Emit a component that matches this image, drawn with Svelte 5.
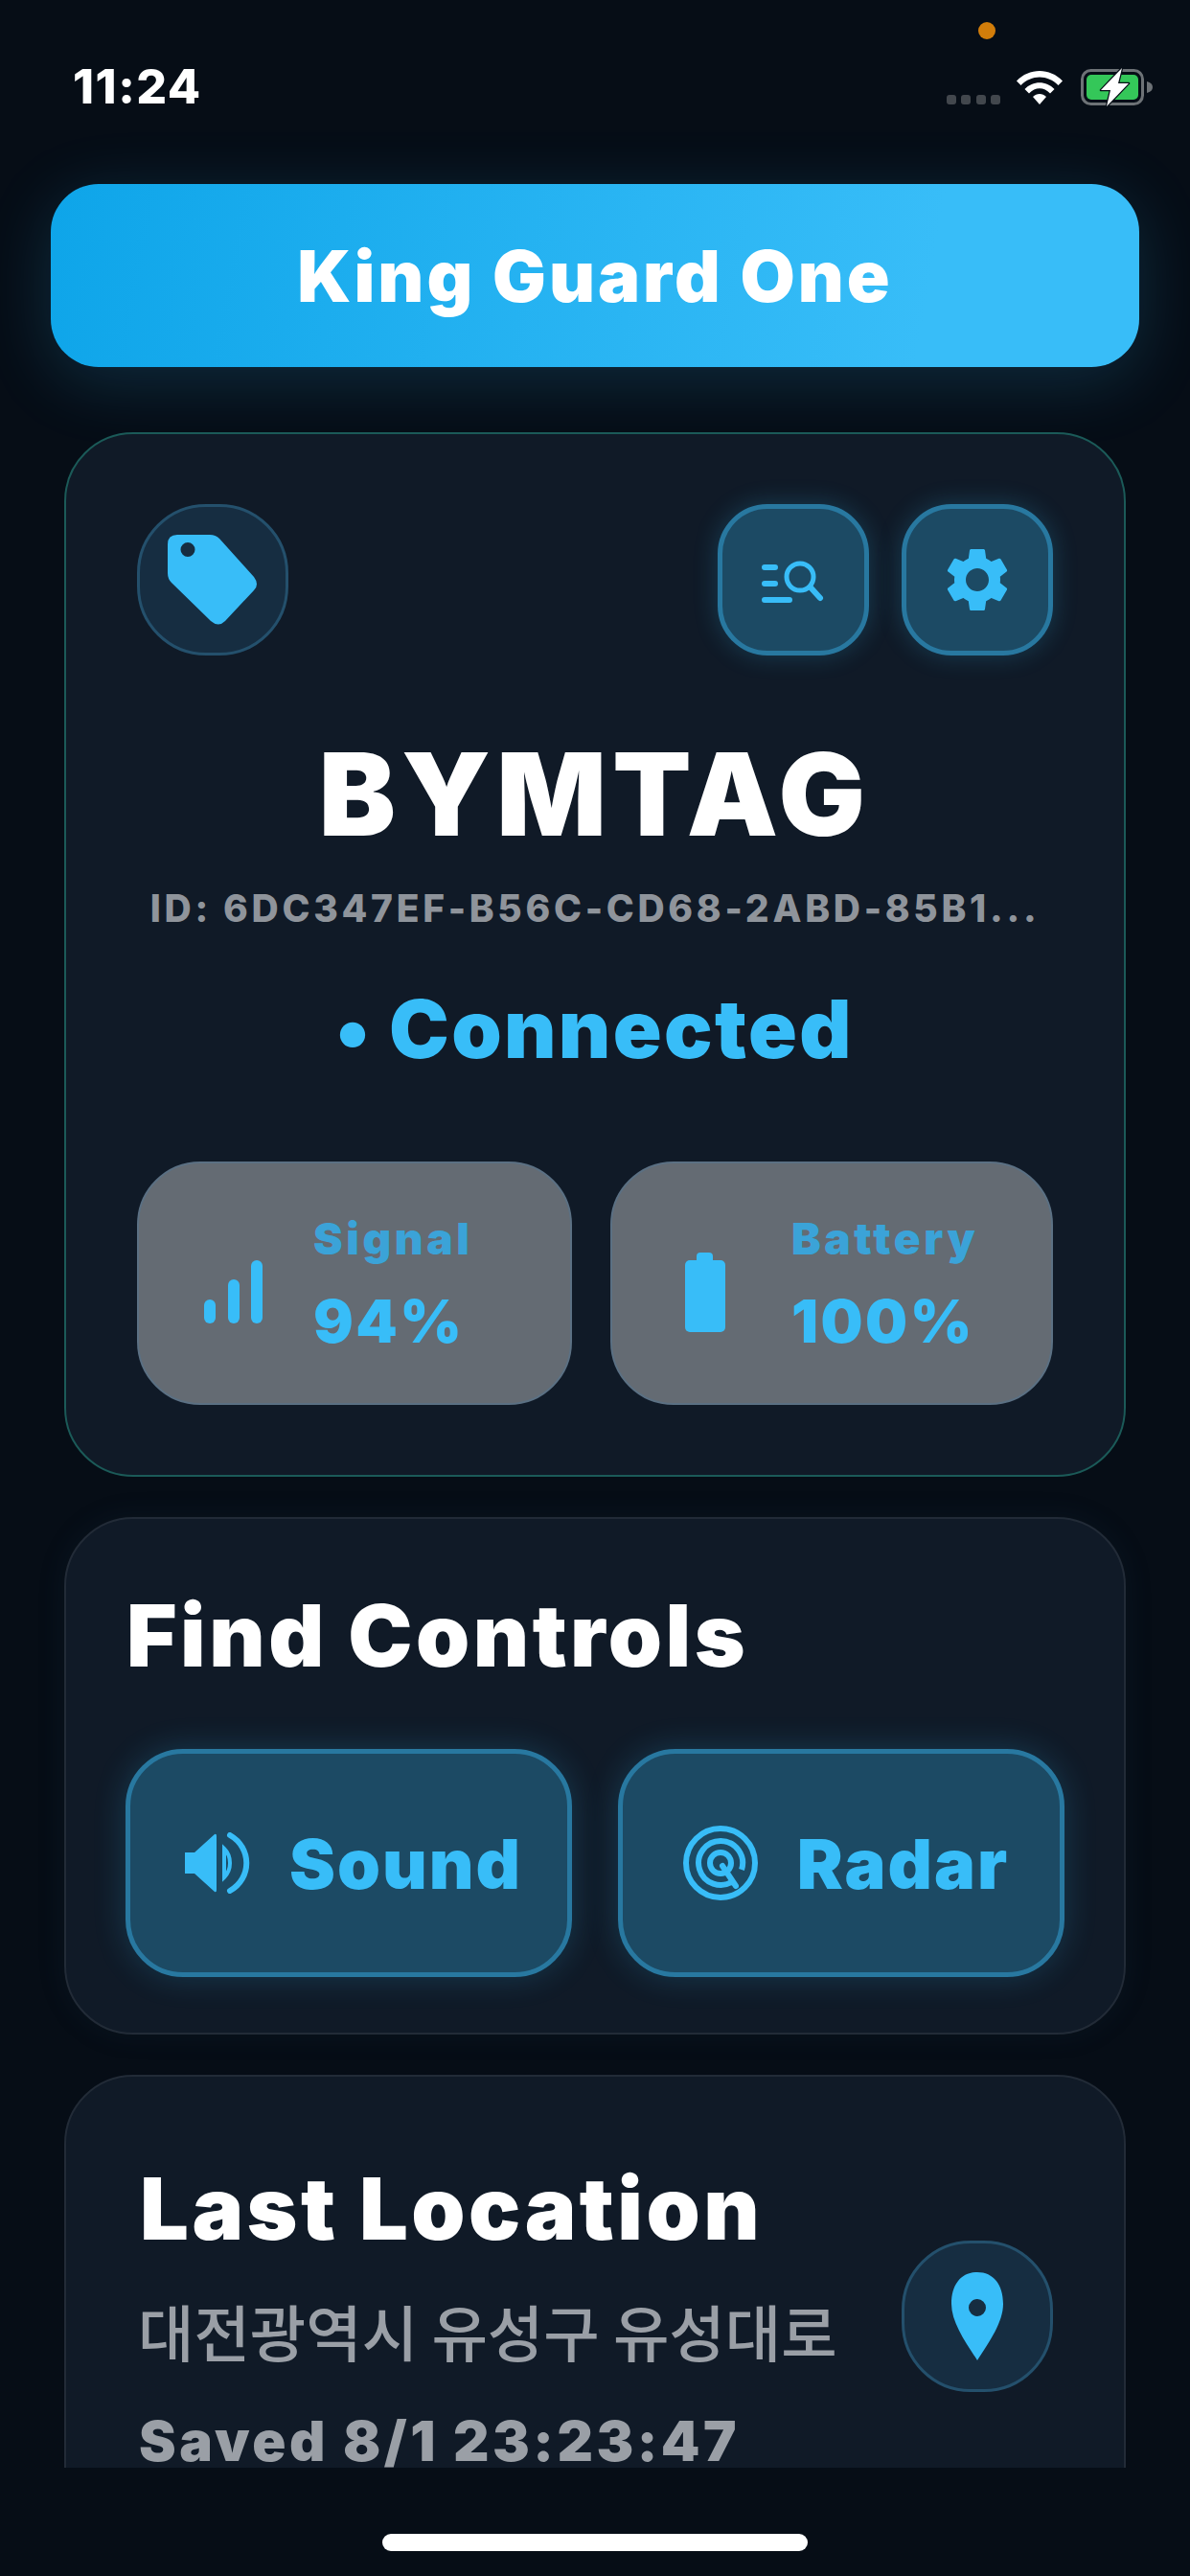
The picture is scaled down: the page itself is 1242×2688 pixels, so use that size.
<script>
  const stats = [
    { label: 'Signal', value: '94%', kind: 'signal' },
    { label: 'Battery', value: '100%', kind: 'battery' }
  ];
</script>

<div class="page">
  <div class="status">
    <span class="time">11:24</span>
    <span class="mic"></span>
    <div class="status-right">
      <div class="dots"><i></i><i></i><i></i><i></i></div>
      <svg class="wifi" viewBox="0 0 50 36" width="50" height="36">
        <path d="M1 11.5 C14 -2.5 36 -2.5 49 11.5 L44.5 16 C33.5 4.5 16.5 4.5 5.500 16 Z" fill="#fff"/>
        <path d="M9.500 20 C18 11 32 11 40.500 20 L36 24.500 C29.500 17.500 20.500 17.500 14 24.500 Z" fill="#fff"/>
        <path d="M18 28 C22 24 28 24 32 28 L25 36 Z" fill="#fff"/>
      </svg>
      <svg class="batt" viewBox="0 0 78 40" width="78" height="40">
        <rect x="1.500" y="2.500" width="63" height="35" rx="9" fill="none" stroke="#6d7276" stroke-width="3"/>
        <rect x="6" y="7" width="54" height="26" rx="5" fill="#34c759"/>
        <path d="M69 14 C73 15 75 17 75 20 C75 23 73 25 69 26 Z" fill="#6d7276"/>
        <path d="M43 0 L21 23 L31 23 L27 40 L50 16 L39 16 Z" fill="#fff" stroke="#070e17" stroke-width="2.500" stroke-linejoin="round" paint-order="stroke"/>
      </svg>
    </div>
  </div>

  <div class="brand">King Guard One</div>

  <main>
    <section class="card hero">
      <div class="top-row">
        <div class="round-btn">
          <svg viewBox="0 0 158 158" width="158" height="158">
            <path fill-rule="evenodd" fill="#38bdf8" d="M42 32 H76 Q82 32 86 36 L122 76 Q128 84 122 90 L92 122 Q85 129 77 122 L36 82 Q32 78 32 72 V42 Q32 32 42 32 Z M53 40 A7.500 7.500 0 1 0 53 55 A7.500 7.500 0 1 0 53 40 Z"/>
          </svg>
        </div>
        <div class="actions">
          <button class="glow-btn" aria-label="Search">
            <svg viewBox="0 0 158 158" width="158" height="158" fill="none" stroke="#38bdf8" stroke-linecap="round">
              <path d="M49 66 H60 M49 83 H60 M49 100 H75" stroke-width="6"/>
              <circle cx="86" cy="76" r="14" stroke-width="5"/>
              <path d="M97 87 L107 98" stroke-width="6"/>
            </svg>
          </button>
          <button class="glow-btn" aria-label="Settings">
            <svg viewBox="0 0 24 24" width="80" height="80"><path fill="#38bdf8" d="M19.14 12.94c.04-.3.06-.61.06-.94 0-.32-.02-.64-.07-.94l2.03-1.58c.18-.14.23-.41.12-.61l-1.92-3.32c-.12-.22-.37-.29-.59-.22l-2.39.96c-.5-.38-1.03-.7-1.62-.94l-.36-2.54c-.04-.24-.24-.41-.48-.41h-3.84c-.24 0-.43.17-.47.41l-.36 2.54c-.59.24-1.13.57-1.62.94l-2.39-.96c-.22-.08-.47 0-.59.22L2.740 8.870c-.12.21-.08.47.12.61l2.030 1.580c-.05.3-.09.63-.09.94s.02.64.07.94l-2.030 1.580c-.18.14-.23.41-.12.61l1.920 3.320c.12.22.37.29.59.22l2.390-.96c.5.38 1.030.7 1.620.94l.36 2.540c.05.24.24.41.48.41h3.840c.24 0 .44-.17.47-.41l.36-2.540c.59-.24 1.130-.56 1.620-.94l2.390.96c.22.08.47 0 .59-.22l1.920-3.320c.12-.22.07-.47-.12-.61l-2.010-1.580zM12 15.600c-1.980 0-3.600-1.620-3.600-3.600s1.620-3.600 3.600-3.600 3.600 1.620 3.600 3.600-1.620 3.600-3.600 3.600z"/></svg>
          </button>
        </div>
      </div>
      <h1>BYMTAG</h1>
      <p class="id">ID: 6DC347EF-B56C-CD68-2ABD-85B1...</p>
      <p class="state">• Connected</p>
      <div class="stats">
        {#each stats as s}
          <div class="stat">
            {#if s.kind === 'signal'}
              <svg viewBox="0 0 62 66" width="62" height="66" fill="#38bdf8">
                <rect x="0" y="41" width="12" height="25" rx="6"/>
                <rect x="25" y="20" width="12" height="46" rx="6"/>
                <rect x="49" y="0" width="12" height="66" rx="6"/>
              </svg>
            {:else}
              <svg viewBox="0 0 42 83" width="42" height="83" fill="#38bdf8">
                <rect x="12" y="0" width="17" height="14" rx="4"/>
                <rect x="0" y="8" width="42" height="75" rx="5"/>
              </svg>
            {/if}
            <div class="stat-text">
              <span class="stat-label">{s.label}</span>
              <span class="stat-value">{s.value}</span>
            </div>
          </div>
        {/each}
      </div>
    </section>

    <section class="card find">
      <h2>Find Controls</h2>
      <div class="find-row">
        <button class="find-btn">
          <svg viewBox="0 0 68 64" width="68" height="64" fill="#38bdf8">
            <path d="M0 21 H10 L31 2 Q33 1 33 4 V60 Q33 63 31 62 L10 43 H0 Z"/>
            <path d="M41 17 C49 25 49 39 41 47 L41 17 Z" fill="none" stroke="#38bdf8" stroke-width="4"/>
            <path d="M47 3 C70 16 70 48 47 61" fill="none" stroke="#38bdf8" stroke-width="6" stroke-linecap="round"/>
          </svg>
          <span>Sound</span>
        </button>
        <button class="find-btn radar">
          <svg viewBox="0 0 78 78" width="78" height="78" fill="none" stroke="#38bdf8" stroke-width="6">
            <circle cx="39" cy="39" r="36"/>
            <path d="M52 58 A23 23 0 1 1 61 46"/>
            <circle cx="39" cy="39" r="11"/>
            <path d="M41 42 L55 63" stroke-linecap="round"/>
          </svg>
          <span>Radar</span>
        </button>
      </div>
    </section>

    <section class="card last">
      <div class="last-text">
        <h2>Last Location</h2>
        <p class="addr">대전광역시 유성구 유성대로</p>
        <p class="saved">Saved 8/1 23:23:47</p>
      </div>
      <div class="round-btn pin">
        <svg viewBox="0 0 54 92" width="54" height="92">
          <path fill-rule="evenodd" fill="#38bdf8" d="M27 0 C44 0 54 13 54 33 C54 52 40 72 27 92 C14 72 0 52 0 33 C0 13 10 0 27 0 Z M27 28 A9 9 0 1 0 27 46 A9 9 0 1 0 27 28 Z"/>
        </svg>
      </div>
    </section>
  </main>

  <div class="bottom"><div class="home"></div></div>
</div>

<style>
  :global(body) {
    margin: 0;
    background: #060d16;
  }
  .page {
    position: relative;
    width: 1242px;
    height: 2688px;
    display: flex;
    flex-direction: column;
    overflow: hidden;
    background: #060d16;
    font-family: Inter, "Noto Sans CJK KR", sans-serif;
    color: #fff;
  }
  .status {
    height: 192px;
    flex: none;
    display: flex;
    align-items: flex-start;
    justify-content: space-between;
    padding: 65px 36px 0 76px;
    box-sizing: border-box;
  }
  .time {
    font-size: 50px;
    font-weight: 800;
    line-height: 50px;
    letter-spacing: 1.500px;
  }
  .mic {
    position: absolute;
    left: 1021px;
    top: 23px;
    width: 18px;
    height: 18px;
    border-radius: 50%;
    background: #d27d0a;
  }
  .status-right {
    display: flex;
    align-items: flex-end;
    gap: 18px;
    padding-top: 6px;
  }
  .dots {
    display: flex;
    gap: 5.500px;
    margin-right: -2px;
    padding-bottom: 1px;
  }
  .dots i {
    width: 10px;
    height: 10px;
    border-radius: 3px;
    background: #42474d;
  }
  .wifi { display: block; margin-bottom: 1px; }
  .batt { display: block; margin-bottom: -1px; }
  .brand {
    flex: none;
    margin: 0 53px;
    height: 191px;
    border-radius: 50px;
    background: linear-gradient(100deg, #0ea5e9, #38bdf8 80%);
    box-shadow: 0 14px 70px rgba(56, 189, 248, 0.18);
    display: flex;
    align-items: center;
    justify-content: center;
    font-size: 74px;
    font-weight: 900;
    letter-spacing: 3px;
  }
  main {
    flex: 1;
    min-height: 0;
    overflow: hidden;
    margin-top: 68px;
    padding: 0 67px;
    display: flex;
    flex-direction: column;
    gap: 42px;
  }
  .card {
    flex: none;
    box-sizing: border-box;
    background: #101a27;
    border: 2px solid #222b37;
    border-radius: 72px;
  }
  .hero {
    height: 1090px;
    border: 2px solid #1b5a58;
    padding: 73px 74px 0;
  }
  .top-row {
    display: flex;
    justify-content: space-between;
  }
  .actions {
    display: flex;
    gap: 34px;
  }
  .round-btn {
    width: 158px;
    height: 158px;
    box-sizing: border-box;
    border: 3px solid #24506c;
    border-radius: 72px;
    background: #162d41;
    display: flex;
    align-items: center;
    justify-content: center;
  }
  .round-btn svg { flex: none; }
  .glow-btn {
    width: 158px;
    height: 158px;
    box-sizing: border-box;
    padding: 0;
    border: 5px solid #2878a0;
    border-radius: 52px;
    background: #1c4a64;
    box-shadow: 0 0 26px rgba(56, 189, 248, 0.22);
    display: flex;
    align-items: center;
    justify-content: center;
  }
  .glow-btn svg { flex: none; }
  h1 {
    margin: 85px 0 0;
    text-align: center;
    font-size: 120px;
    line-height: 120px;
    font-weight: 900;
    letter-spacing: 6.200px;
  }
  .id {
    margin: 37px -20px 0;
    text-align: center;
    font-size: 39px;
    line-height: 44px;
    font-weight: 800;
    letter-spacing: 3.700px;
    color: #8f949b;
    white-space: nowrap;
  }
  .state {
    margin: 54px 0 0;
    text-align: center;
    font-size: 84px;
    line-height: 100px;
    font-weight: 900;
    letter-spacing: 2.300px;
    color: #38bdf8;
  }
  .stats {
    margin-top: 88px;
    display: flex;
    gap: 40px;
  }
  .stat {
    flex: 1;
    height: 254px;
    box-sizing: border-box;
    border: 2px solid #5b7083;
    border-radius: 66px;
    background: #646b73;
    display: flex;
    align-items: center;
    padding-left: 68px;
    gap: 52px;
  }
  .stat:last-child { padding-left: 76px; gap: 69px; }
  .stat svg { flex: none; margin-top: 18px; }
  .stat-text {
    display: flex;
    flex-direction: column;
    gap: 29px;
  }
  .stat-label {
    font-size: 46px;
    line-height: 50px;
    font-weight: 900;
    letter-spacing: 3.600px;
    color: #3ba3d8;
  }
  .stat-value {
    font-size: 62px;
    line-height: 66px;
    font-weight: 900;
    letter-spacing: 2.500px;
    color: #38bdf8;
  }
  .find {
    height: 540px;
    padding: 72px 62px 0;
    box-shadow: 0 0 30px rgba(40, 70, 100, 0.12);
  }
  h2 {
    margin: 0 0 0 1px;
    font-size: 90px;
    line-height: 100px;
    font-weight: 900;
    letter-spacing: 3.500px;
  }
  .find-row {
    margin-top: 68px;
    display: flex;
    gap: 48px;
  }
  .find-btn {
    flex: 1;
    height: 238px;
    box-sizing: border-box;
    padding: 0 0 0 10px;
    border: 5px solid #2878a0;
    border-radius: 60px;
    background: #1c4a64;
    box-shadow: 0 0 34px rgba(56, 189, 248, 0.2);
    display: flex;
    align-items: center;
    justify-content: center;
    gap: 41px;
    color: #38bdf8;
    font-family: inherit;
    font-size: 72px;
    font-weight: 900;
    letter-spacing: 2px;
  }
  .last {
    height: 480px;
    padding: 88px 74px 0 76px;
    display: flex;
    justify-content: space-between;
  }
  .last-text {
    flex: 1;
    min-width: 0;
  }
  .addr {
    margin: 36px 0 0 -1px;
    font-family: "Noto Sans CJK KR", sans-serif;
    font-size: 63.500px;
    line-height: 80px;
    font-weight: 500;
    color: #9a9fa6;
    white-space: nowrap;
  }
  .saved {
    margin: 51px 0 0;
    font-size: 58px;
    line-height: 50px;
    font-weight: 900;
    letter-spacing: 3.500px;
    color: #9a9fa6;
    white-space: nowrap;
  }
  .pin { margin-top: 83px; flex: none; }
  .bottom {
    flex: none;
    height: 113px;
    position: relative;
    display: flex;
    justify-content: center;
    padding-top: 69px;
    box-sizing: border-box;
  }
  .home {
    width: 444px;
    height: 18px;
    border-radius: 9px;
    background: #fff;
  }
</style>
